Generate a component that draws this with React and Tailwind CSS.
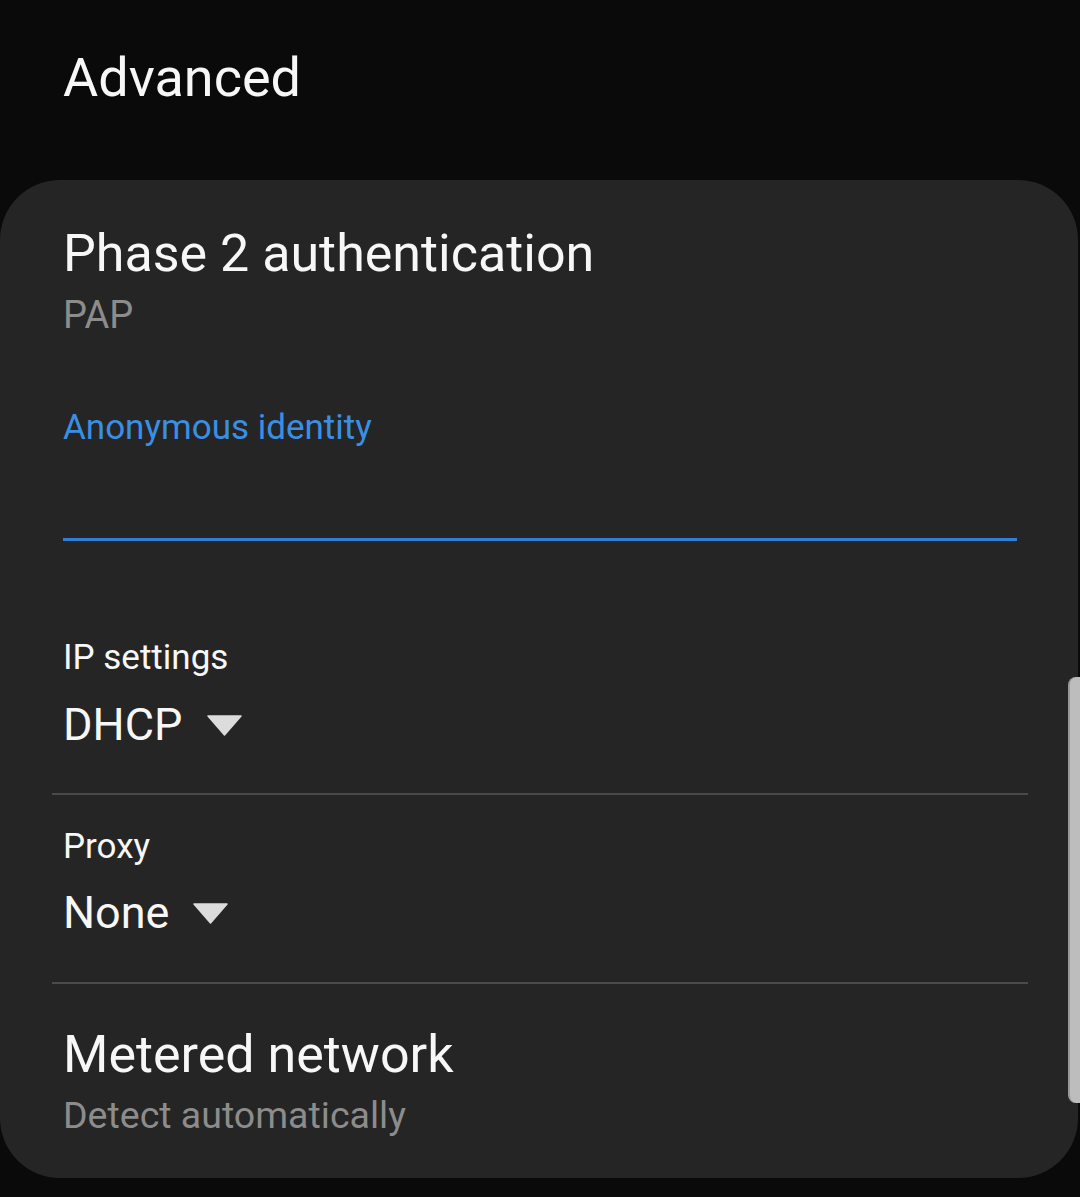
import React from "react";

function Caret() {
  return (
    <svg width="35" height="21" viewBox="0 0 35 21" className="block">
      <polygon points="1,1 34,1 17.5,20" fill="#dcdcdc" stroke="#dcdcdc" strokeWidth="1.5" strokeLinejoin="round" />
    </svg>
  );
}

export default function App() {
  return (
    <div
      className="relative w-[1080px] h-[1197px] bg-[#0a0a0a] overflow-hidden text-[#f7f7f7]"
      style={{ fontFamily: "Roboto, 'Noto Sans', sans-serif" }}
    >
      <div className="h-[180px] pt-[48px] pl-[63px]">
        <div className="text-[54px] leading-[60px]">Advanced</div>
      </div>

      <div className="w-[1078px] bg-[#252525] rounded-[60px] pt-[44px] pb-[40px]">
        <div className="pl-[63px] pr-[64px]">
          <div className="text-[52px] leading-[60px]">Phase 2 authentication</div>
          <div className="mt-[8px] text-[38px] leading-[46px] text-[#8c8c8c]">PAP</div>
          <div className="mt-[68px] text-[35px] leading-[44px] text-[#3b8fe3]">Anonymous identity</div>
        </div>
        <div className="mt-[88px] ml-[63px] mr-[61px] h-[3px] bg-[#2f80d4]" />

        <div className="pl-[63px] pr-[64px]">
          <div className="mt-[95px] text-[35px] leading-[44px]">IP settings</div>
          <div className="mt-[18px] flex items-center gap-[25px]">
            <span className="text-[45px] leading-[54px]">DHCP</span>
            <Caret />
          </div>
        </div>
        <div className="mt-[41px] ml-[52px] mr-[50px] h-[2px] bg-[#4a4a4a]" />

        <div className="pl-[63px] pr-[64px]">
          <div className="mt-[30px] text-[35px] leading-[44px]">Proxy</div>
          <div className="mt-[17px] flex items-center gap-[24px]">
            <span className="text-[45px] leading-[54px]">None</span>
            <Caret />
          </div>
        </div>
        <div className="mt-[42px] ml-[52px] mr-[50px] h-[2px] bg-[#4a4a4a]" />

        <div className="pl-[63px] pr-[64px]">
          <div className="mt-[41px] text-[52px] leading-[60px]">Metered network</div>
          <div className="mt-[7px] text-[37.5px] leading-[46px] text-[#8c8c8c]">Detect automatically</div>
        </div>
      </div>

      <div className="absolute right-0 top-[677px] w-[12px] h-[426px] bg-[#bdbdbd] rounded-l-[8px] border-l-[2px] border-[#9a9a9a]" />
    </div>
  );
}
